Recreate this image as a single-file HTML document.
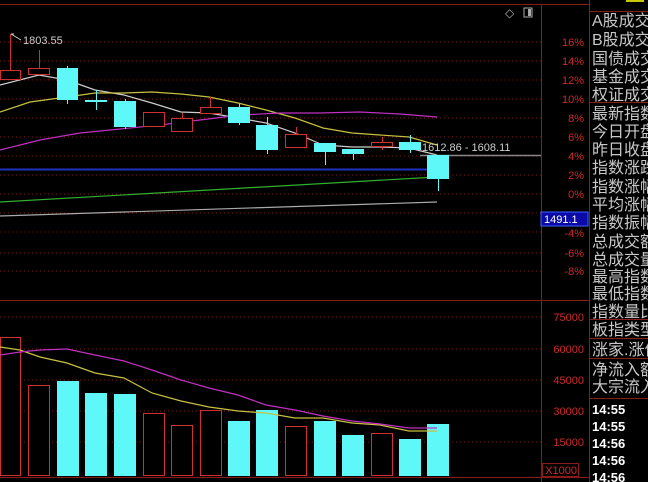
<!DOCTYPE html>
<html><head><meta charset="utf-8"><style>
html,body{margin:0;padding:0;background:#000;width:648px;height:482px;overflow:hidden}
svg{display:block}
.pct{fill:#d02828;font:11px "Liberation Sans",sans-serif;text-anchor:end}
.cn{fill:#c8c8c8;font:16px "Liberation Sans","Noto Sans CJK SC",sans-serif}
.tm{fill:#fff;font:bold 13px "Liberation Sans",sans-serif}
</style></head><body>
<svg width="648" height="482" xmlns="http://www.w3.org/2000/svg">
<g stroke="#8b1a1a" stroke-width="1" fill="none">
<line x1="0" y1="4.5" x2="590" y2="4.5"/>
<line x1="541.5" y1="4" x2="541.5" y2="482"/>
<line x1="589.5" y1="0" x2="589.5" y2="482"/>
<line x1="0" y1="300.5" x2="590" y2="300.5"/>
<line x1="0" y1="477.5" x2="590" y2="477.5"/>
<line x1="590" y1="11.5" x2="648" y2="11.5"/>
<line x1="590" y1="102.5" x2="648" y2="102.5"/>
<line x1="590" y1="319.5" x2="648" y2="319.5"/>
<line x1="590" y1="338.5" x2="648" y2="338.5"/>
<line x1="590" y1="358.5" x2="648" y2="358.5"/>
<line x1="590" y1="398.5" x2="648" y2="398.5"/>
<rect x="542.5" y="463.5" width="36" height="13"/>
</g>
<g stroke="#7a1818" stroke-dasharray="1,3">
<line x1="0" y1="42" x2="541" y2="42"/><line x1="0" y1="61" x2="541" y2="61"/><line x1="0" y1="80" x2="541" y2="80"/><line x1="0" y1="99" x2="541" y2="99"/><line x1="0" y1="118" x2="541" y2="118"/><line x1="0" y1="137" x2="541" y2="137"/><line x1="0" y1="156" x2="541" y2="156"/><line x1="0" y1="175" x2="541" y2="175"/><line x1="0" y1="194" x2="541" y2="194"/><line x1="0" y1="213" x2="541" y2="213"/><line x1="0" y1="232" x2="541" y2="232"/><line x1="0" y1="253" x2="541" y2="253"/><line x1="0" y1="271" x2="541" y2="271"/>
<line x1="0" y1="317" x2="541" y2="317"/><line x1="0" y1="349" x2="541" y2="349"/><line x1="0" y1="380" x2="541" y2="380"/><line x1="0" y1="411" x2="541" y2="411"/><line x1="0" y1="442" x2="541" y2="442"/>
</g>
<g class="pct">
<text x="584" y="46">16%</text><text x="584" y="65">14%</text><text x="584" y="84">12%</text><text x="584" y="103">10%</text><text x="584" y="122">8%</text><text x="584" y="141">6%</text><text x="584" y="160">4%</text><text x="584" y="179">2%</text><text x="584" y="198">0%</text><text x="584" y="237">-4%</text><text x="584" y="257">-6%</text><text x="584" y="275">-8%</text>
<text x="584" y="321">75000</text><text x="584" y="353">60000</text><text x="584" y="384">45000</text><text x="584" y="415">30000</text><text x="584" y="446">15000</text>
<text x="577" y="474">X1000</text>
</g>
<rect x="541" y="212" width="47" height="14" fill="#0a0aa8" stroke="#4060ff"/>
<text x="544" y="223" fill="#fff" font-family="Liberation Sans" font-size="11">1491.1</text>
<text x="505" y="17" fill="#aaa" font-size="12">◇</text>
<rect x="524" y="8" width="8" height="9" fill="none" stroke="#aaa"/><rect x="528" y="9" width="3" height="7" fill="#aaa"/>
<rect x="626" y="0" width="18" height="2" fill="#c8c800"/>
<polyline fill="none" stroke="#ccc" stroke-width="1.2" points="0,85 39,75 67,80 95,90 124,95 152,103 181,112 209,113 238,118 266,123 295,133 323,145 352,147 380,147 409,148 437,155"/>
<polyline fill="none" stroke="#c8c040" stroke-width="1.2" points="0,112 30,102 67,97 95,93 124,93 152,92 181,94 209,97 238,103 266,110 295,118 323,128 352,133 380,135 409,137 437,145"/>
<polyline fill="none" stroke="#c030c0" stroke-width="1.2" points="0,150 40,140 80,133 120,129 160,125 200,120 240,115 280,113 320,113 360,112 400,114 437,117"/>
<line x1="0" y1="169.5" x2="437" y2="169.5" stroke="#2030c0" stroke-width="2"/>
<line x1="0" y1="202" x2="437" y2="177" stroke="#30b030" stroke-width="1.2"/>
<line x1="0" y1="216" x2="437" y2="202" stroke="#aaa" stroke-width="1.2"/>
<line x1="420" y1="155.5" x2="541" y2="155.5" stroke="#888" stroke-width="1.5"/>
<text x="422" y="151" fill="#ccc" font-family="Liberation Sans" font-size="11">1612.86 - 1608.11</text>
<text x="23" y="44" fill="#ccc" font-family="Liberation Sans" font-size="11">1803.55</text>
<path d="M11 34 h3 M11 34 l10 6" stroke="#ccc" fill="none"/>
<g stroke="#d03030" fill="#000" stroke-width="1">
<line x1="10.5" y1="34" x2="10.5" y2="70"/><rect x="0.5" y="70.5" width="20" height="9"/>
<line x1="39.5" y1="50" x2="39.5" y2="68"/><rect x="28.5" y="68.5" width="21" height="6"/>
<rect x="143.5" y="112.5" width="21" height="14"/>
<line x1="182.5" y1="113" x2="182.5" y2="118"/><rect x="171.5" y="118.5" width="21" height="13"/>
<line x1="210.5" y1="97" x2="210.5" y2="107"/><rect x="200.5" y="107.5" width="21" height="6"/>
<line x1="296.5" y1="127" x2="296.5" y2="134"/><rect x="285.5" y="134.5" width="21" height="13"/>
<line x1="382.5" y1="137" x2="382.5" y2="150"/><rect x="371.5" y="142.5" width="21" height="4"/>
</g>
<g fill="#5ff8f8" stroke="#5ff8f8">
<line x1="67.5" y1="66" x2="67.5" y2="104"/><rect x="57" y="68" width="21" height="32" stroke="none"/>
<line x1="96.5" y1="90" x2="96.5" y2="110"/><rect x="85" y="100" width="22" height="2" stroke="none"/>
<line x1="125.5" y1="99" x2="125.5" y2="129"/><rect x="114" y="101" width="22" height="26" stroke="none"/>
<line x1="239.5" y1="104" x2="239.5" y2="125"/><rect x="228" y="107" width="22" height="16" stroke="none"/>
<line x1="267.5" y1="117" x2="267.5" y2="154"/><rect x="256" y="125" width="22" height="25" stroke="none"/>
<line x1="325.5" y1="143" x2="325.5" y2="165"/><rect x="314" y="143" width="22" height="9" stroke="none"/>
<line x1="353.5" y1="149" x2="353.5" y2="160"/><rect x="342" y="149" width="22" height="5" stroke="none"/>
<line x1="410.5" y1="135" x2="410.5" y2="153"/><rect x="399" y="142" width="22" height="8" stroke="none"/>
<line x1="438.5" y1="155" x2="438.5" y2="191"/><rect x="427" y="155" width="22" height="24" stroke="none"/>
</g>
<g stroke="#d03030" fill="#000">
<rect x="0.5" y="337.5" width="20" height="138"/>
<rect x="28.5" y="385.5" width="21" height="90"/>
<rect x="143.5" y="413.5" width="21" height="62"/>
<rect x="171.5" y="425.5" width="21" height="50"/>
<rect x="200.5" y="410.5" width="21" height="65"/>
<rect x="285.5" y="426.5" width="21" height="49"/>
<rect x="371.5" y="433.5" width="21" height="42"/>
</g>
<g fill="#5ff8f8">
<rect x="57" y="381" width="22" height="95"/><rect x="85" y="393" width="22" height="83"/><rect x="114" y="394" width="22" height="82"/>
<rect x="228" y="421" width="22" height="55"/><rect x="256" y="410" width="22" height="66"/><rect x="314" y="421" width="22" height="55"/>
<rect x="342" y="435" width="22" height="41"/><rect x="399" y="439" width="22" height="37"/><rect x="427" y="424" width="22" height="52"/>
</g>
<polyline fill="none" stroke="#c8c040" stroke-width="1.2" points="0,347 20,350 40,357 67,363 95,373 124,378 152,393 181,401 209,407 238,411 266,413 295,418 323,418 352,423 380,425 409,431 437,431"/>
<polyline fill="none" stroke="#c030c0" stroke-width="1.2" points="0,355 20,352 40,350 67,349 95,355 124,361 152,370 181,380 209,388 238,395 266,405 295,410 323,416 352,421 380,424 409,428 437,428"/>
<g class="cn">
<text x="592" y="26">A股成交</text><text x="592" y="45">B股成交</text><text x="592" y="64">国债成交</text><text x="592" y="82">基金成交</text><text x="592" y="100">权证成交</text>
<text x="592" y="119">最新指数</text><text x="592" y="137">今日开盘</text><text x="592" y="155">昨日收盘</text><text x="592" y="173">指数涨跌</text><text x="592" y="192">指数涨幅</text><text x="592" y="210">平均涨幅</text><text x="592" y="228">指数振幅</text><text x="592" y="247">总成交额</text><text x="592" y="265">总成交量</text><text x="592" y="282">最高指数</text><text x="592" y="299">最低指数</text><text x="592" y="317">指数量比</text><text x="592" y="335">板指类型</text><text x="592" y="355">涨家.涨停</text><text x="592" y="375">净流入额</text><text x="592" y="392">大宗流入</text>
</g>
<g class="tm">
<text x="592" y="414">14:55</text><text x="592" y="431">14:55</text><text x="592" y="448">14:56</text><text x="592" y="465">14:56</text><text x="592" y="482">14:56</text>
</g>
</svg>
</body></html>
